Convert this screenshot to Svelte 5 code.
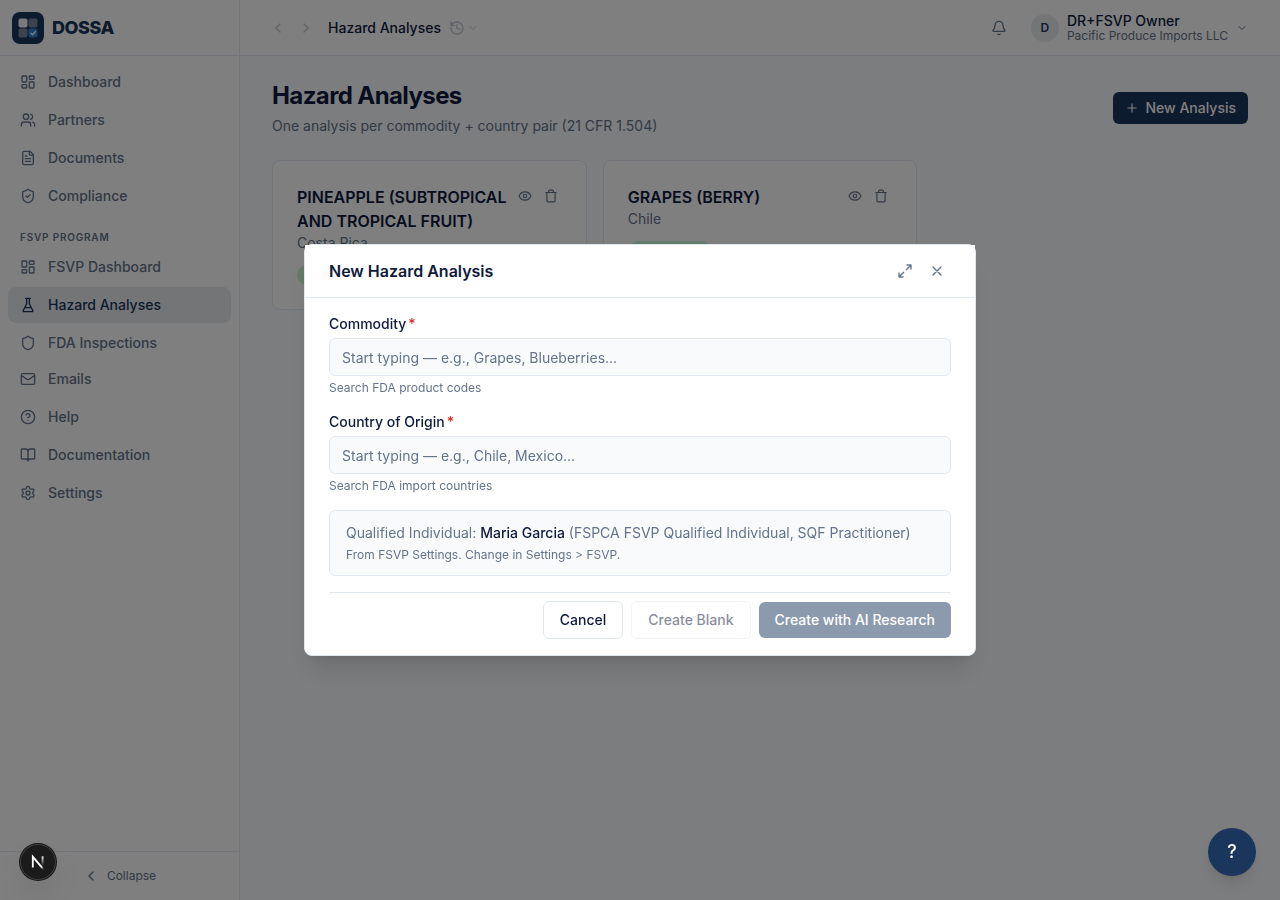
<script lang="ts">
	const icons: Record<string, string> = {
		dashboard: "M4 3h5a1 1 0 0 1 1 1v7a1 1 0 0 1-1 1H4a1 1 0 0 1-1-1V4a1 1 0 0 1 1-1zM15 3h5a1 1 0 0 1 1 1v3a1 1 0 0 1-1 1h-5a1 1 0 0 1-1-1V4a1 1 0 0 1 1-1zM15 12h5a1 1 0 0 1 1 1v7a1 1 0 0 1-1 1h-5a1 1 0 0 1-1-1v-7a1 1 0 0 1 1-1zM4 16h5a1 1 0 0 1 1 1v3a1 1 0 0 1-1 1H4a1 1 0 0 1-1-1v-3a1 1 0 0 1 1-1z",
		users: "M16 21v-2a4 4 0 0 0-4-4H6a4 4 0 0 0-4 4v2M13 7a4 4 0 1 1-8 0 4 4 0 0 1 8 0M22 21v-2a4 4 0 0 0-3-3.87M16 3.13a4 4 0 0 1 0 7.75",
		file: "M15 2H6a2 2 0 0 0-2 2v16a2 2 0 0 0 2 2h12a2 2 0 0 0 2-2V7zM14 2v4a2 2 0 0 0 2 2h4M10 9H8M16 13H8M16 17H8",
		shieldCheck: "M20 13c0 5-3.5 7.5-7.66 8.95a1 1 0 0 1-.67-.01C7.5 20.5 4 18 4 13V6a1 1 0 0 1 1-1c2 0 4.5-1.2 6.24-2.72a1.17 1.17 0 0 1 1.52 0C14.51 3.81 17 5 19 5a1 1 0 0 1 1 1zM9 12l2 2 4-4",
		shield: "M20 13c0 5-3.5 7.5-7.66 8.95a1 1 0 0 1-.67-.01C7.5 20.5 4 18 4 13V6a1 1 0 0 1 1-1c2 0 4.5-1.2 6.24-2.72a1.17 1.17 0 0 1 1.52 0C14.51 3.81 17 5 19 5a1 1 0 0 1 1 1z",
		flask: "M10 2v7.53a2 2 0 0 1-.21.9L4.72 20.55a1 1 0 0 0 .9 1.45h12.76a1 1 0 0 0 .9-1.45l-5.07-10.13a2 2 0 0 1-.21-.89V2M8.5 2h7M7 16h10",
		mail: "M4 4h16a2 2 0 0 1 2 2v12a2 2 0 0 1-2 2H4a2 2 0 0 1-2-2V6a2 2 0 0 1 2-2zM22 7l-8.97 5.7a1.94 1.94 0 0 1-2.06 0L2 7",
		help: "M22 12a10 10 0 1 1-20 0 10 10 0 0 1 20 0M9.09 9a3 3 0 0 1 5.83 1c0 2-3 3-3 3M12 17h.01",
		book: "M12 7v14M3 18a1 1 0 0 1-1-1V4a1 1 0 0 1 1-1h5a4 4 0 0 1 4 4 4 4 0 0 1 4-4h5a1 1 0 0 1 1 1v13a1 1 0 0 1-1 1h-6a3 3 0 0 0-3 3 3 3 0 0 0-3-3z",
		settings: "M9.671 4.136a2.34 2.34 0 0 1 4.659 0 2.34 2.34 0 0 0 3.319 1.915 2.34 2.34 0 0 1 2.33 4.033 2.34 2.34 0 0 0 0 3.831 2.34 2.34 0 0 1-2.33 4.033 2.34 2.34 0 0 0-3.319 1.915 2.34 2.34 0 0 1-4.659 0 2.34 2.34 0 0 0-3.32-1.915 2.34 2.34 0 0 1-2.33-4.033 2.34 2.34 0 0 0 0-3.831A2.34 2.34 0 0 1 6.35 6.051a2.34 2.34 0 0 0 3.319-1.915M15 12a3 3 0 1 1-6 0 3 3 0 0 1 6 0",
		left: "M15 18l-6-6 6-6",
		right: "M9 18l6-6-6-6",
		down: "M6 9l6 6 6-6",
		history: "M3 12a9 9 0 1 0 9-9 9.75 9.75 0 0 0-6.74 2.74L3 8M3 3v5h5M12 7v5l4 2",
		bell: "M10.268 21a2 2 0 0 0 3.464 0M3.262 15.326A1 1 0 0 0 4 17h16a1 1 0 0 0 .74-1.673C19.41 13.956 18 12.499 18 8A6 6 0 0 0 6 8c0 4.499-1.411 5.956-2.738 7.326",
		plus: "M5 12h14M12 5v14",
		eye: "M2.062 12.348a1 1 0 0 1 0-.696 10.75 10.75 0 0 1 19.876 0 1 1 0 0 1 0 .696 10.75 10.75 0 0 1-19.876 0M15 12a3 3 0 1 1-6 0 3 3 0 0 1 6 0",
		trash: "M3 6h18M19 6v14a2 2 0 0 1-2 2H7a2 2 0 0 1-2-2V6M8 6V4a2 2 0 0 1 2-2h4a2 2 0 0 1 2 2v2",
		expand: "M15 3h6v6M21 3l-7 7M3 21l7-7M9 21H3v-6",
		close: "M18 6L6 18M6 6l12 12",
	};

	const mainNav = [
		{ label: "Dashboard", icon: "dashboard" },
		{ label: "Partners", icon: "users" },
		{ label: "Documents", icon: "file" },
		{ label: "Compliance", icon: "shieldCheck" },
	];

	const fsvpNav = [
		{ label: "FSVP Dashboard", icon: "dashboard" },
		{ label: "Hazard Analyses", icon: "flask", active: true },
		{ label: "FDA Inspections", icon: "shield" },
	];

	const bottomNav = [
		{ label: "Emails", icon: "mail" },
		{ label: "Help", icon: "help" },
		{ label: "Documentation", icon: "book" },
		{ label: "Settings", icon: "settings" },
	];

	const analyses = [
		{ commodity: "PINEAPPLE (SUBTROPICAL AND TROPICAL FRUIT)", country: "Costa Rica" },
		{ commodity: "GRAPES (BERRY)", country: "Chile" },
	];

	let open = $state(true);
	let commodity = $state("");
	let country = $state("");
	let incomplete = $derived(!commodity || !country);
</script>

{#snippet icon(name: string, size = 16)}
	<svg class="icon" width={size} height={size} viewBox="0 0 24 24" aria-hidden="true">
		<path d={icons[name]} />
	</svg>
{/snippet}

{#snippet navList(items: { label: string; icon: string; active?: boolean }[])}
	<div class="nav-list">
		{#each items as item}
			<a class="nav-item" class:active={item.active} href="#top">
				{@render icon(item.icon)}
				{item.label}
			</a>
		{/each}
	</div>
{/snippet}

<div class="app">
	<aside class="sidebar">
		<div class="brand">
			<svg width="32" height="32" viewBox="0 0 32 32" aria-hidden="true">
				<rect width="32" height="32" rx="8" fill="#1a365d" />
				<rect x="6.5" y="6.5" width="9" height="9" rx="2" fill="#fff" opacity="0.95" />
				<rect x="16.5" y="6.5" width="9" height="9" rx="2" fill="#fff" opacity="0.4" />
				<rect x="6.5" y="16.5" width="9" height="9" rx="2" fill="#fff" opacity="0.4" />
				<rect x="16.5" y="16.5" width="9" height="9" rx="2" fill="#3182ce" />
				<path d="M19 21.2l1.5 1.5 3-3.2" fill="none" stroke="#fff" stroke-width="1.3" stroke-linecap="round" stroke-linejoin="round" />
			</svg>
			<span class="brand-name">DOSSA</span>
		</div>
		<nav class="nav">
			{@render navList(mainNav)}
			<h2 class="nav-heading">FSVP Program</h2>
			{@render navList(fsvpNav)}
			{@render navList(bottomNav)}
		</nav>
		<div class="sidebar-foot">
			<button class="collapse">{@render icon("left")}Collapse</button>
		</div>
	</aside>

	<div class="content">
		<header class="topbar">
			<button class="step" aria-label="Back">{@render icon("left")}</button>
			<button class="step" aria-label="Forward">{@render icon("right")}</button>
			<span class="crumb">Hazard Analyses</span>
			<button class="recent" aria-label="Recent pages">
				{@render icon("history")}
				{@render icon("down", 12)}
			</button>
			<button class="bell" aria-label="Notifications">{@render icon("bell")}</button>
			<button class="account">
				<span class="avatar">D</span>
				<span class="who">
					<span class="who-name">DR+FSVP Owner</span>
					<span class="who-org">Pacific Produce Imports LLC</span>
				</span>
				{@render icon("down", 12)}
			</button>
		</header>

		<main class="page">
			<div class="page-head">
				<div>
					<h1>Hazard Analyses</h1>
					<p>One analysis per commodity + country pair (21 CFR 1.504)</p>
				</div>
				<button class="new" onclick={() => (open = true)}>{@render icon("plus", 14)}New Analysis</button>
			</div>
			<div class="cards">
				{#each analyses as item}
					<article class="card">
						<div class="card-top">
							<h3>{item.commodity}</h3>
							<div class="card-actions">
								<button aria-label="View">{@render icon("eye", 14)}</button>
								<button aria-label="Delete">{@render icon("trash", 14)}</button>
							</div>
						</div>
						<p>{item.country}</p>
						<span class="status"></span>
					</article>
				{/each}
			</div>
		</main>
	</div>
</div>

{#if open}
	<div class="overlay">
		<div class="modal" role="dialog" aria-modal="true" aria-labelledby="modal-title">
			<div class="modal-head">
				<h2 id="modal-title">New Hazard Analysis</h2>
				<button aria-label="Expand">{@render icon("expand")}</button>
				<button aria-label="Close" onclick={() => (open = false)}>{@render icon("close")}</button>
			</div>
			<form class="modal-body" onsubmit={(e) => e.preventDefault()}>
				<div class="field">
					<label for="commodity">Commodity<span class="req">*</span></label>
					<input id="commodity" type="text" placeholder="Start typing — e.g., Grapes, Blueberries..." bind:value={commodity} />
					<p class="hint">Search FDA product codes</p>
				</div>
				<div class="field">
					<label for="country">Country of Origin<span class="req">*</span></label>
					<input id="country" type="text" placeholder="Start typing — e.g., Chile, Mexico..." bind:value={country} />
					<p class="hint">Search FDA import countries</p>
				</div>
				<div class="qi">
					<p>Qualified Individual: <strong>Maria Garcia</strong> (FSPCA FSVP Qualified Individual, SQF Practitioner)</p>
					<p class="hint">From FSVP Settings. Change in Settings &gt; FSVP.</p>
				</div>
				<div class="modal-foot">
					<button type="button" class="btn outline" onclick={() => (open = false)}>Cancel</button>
					<button type="button" class="btn outline" disabled={incomplete}>Create Blank</button>
					<button type="submit" class="btn primary" disabled={incomplete}>Create with AI Research</button>
				</div>
			</form>
		</div>
	</div>
{/if}

<button class="help-fab" aria-label="Open help">?</button>

<button class="dev-badge" aria-label="Dev tools">
	<svg width="36" height="36" viewBox="0 0 36 36" fill="none" aria-hidden="true">
		<defs>
			<linearGradient id="dev-diag" x1="18" y1="18" x2="24" y2="25" gradientUnits="userSpaceOnUse">
				<stop stop-color="#fff" />
				<stop offset="0.6" stop-color="#fff" />
				<stop offset="1" stop-color="#fff" stop-opacity="0" />
			</linearGradient>
			<linearGradient id="dev-stem" x1="22" y1="12" x2="22" y2="22" gradientUnits="userSpaceOnUse">
				<stop stop-color="#fff" />
				<stop offset="1" stop-color="#fff" stop-opacity="0" />
			</linearGradient>
		</defs>
		<path d="M12.8 23.5V12.8L23.6 25.4" stroke="url(#dev-diag)" stroke-width="1.8" />
		<path d="M22.6 12.3v9.8" stroke="url(#dev-stem)" stroke-width="1.8" />
	</svg>
</button>

<style>
	:global(body) {
		font-family: Inter, "Liberation Sans", sans-serif;
		font-size: 14px;
		line-height: 20px;
		color: #0f1b3d;
		background: #f8fafc;
	}

	h1, h2, h3, p {
		margin: 0;
	}

	button, input {
		font: inherit;
		color: inherit;
		box-sizing: border-box;
	}

	button {
		display: flex;
		align-items: center;
		justify-content: center;
		padding: 0;
		border: none;
		background: none;
		cursor: pointer;
	}

	.icon {
		flex: none;
		fill: none;
		stroke: currentColor;
		stroke-width: 2;
		stroke-linecap: round;
		stroke-linejoin: round;
	}

	.app {
		display: flex;
		min-height: 100vh;
	}

	/* sidebar */
	.sidebar {
		display: flex;
		flex-direction: column;
		flex: none;
		width: 240px;
		box-sizing: border-box;
		background: #fff;
		border-right: 1px solid #e2e8f0;
		color: #64748b;
	}

	.brand {
		display: flex;
		align-items: center;
		gap: 8px;
		height: 56px;
		box-sizing: border-box;
		padding: 0 12px;
		border-bottom: 1px solid #e2e8f0;
	}

	.brand-name {
		font-size: 18px;
		font-weight: 800;
		letter-spacing: -0.025em;
		color: #1a365d;
	}

	.nav {
		flex: 1;
		padding: 8px;
	}

	.nav-list {
		display: flex;
		flex-direction: column;
		gap: 2px;
	}

	.nav-item {
		display: flex;
		align-items: center;
		gap: 12px;
		padding: 8px 12px;
		border-radius: 8px;
		font-weight: 500;
		color: inherit;
		text-decoration: none;
	}

	.nav-item.active {
		background: #e8ebef;
		color: #1a365d;
	}

	.nav-heading {
		padding: 16px 12px 4px;
		font-size: 10px;
		line-height: 15px;
		font-weight: 600;
		letter-spacing: 0.08em;
		text-transform: uppercase;
	}

	.sidebar-foot {
		padding: 8px;
		border-top: 1px solid #e2e8f0;
	}

	.collapse {
		gap: 8px;
		width: 100%;
		height: 32px;
		font-size: 12px;
	}

	/* top bar */
	.content {
		flex: 1;
		min-width: 0;
	}

	.topbar {
		display: flex;
		align-items: center;
		height: 56px;
		box-sizing: border-box;
		padding: 0 24px;
		background: #fff;
		border-bottom: 1px solid #e2e8f0;
		color: #64748b;
	}

	.step {
		width: 28px;
		height: 28px;
		opacity: 0.4;
	}

	.crumb {
		margin-left: 8px;
		font-weight: 500;
		color: #0f1b3d;
	}

	.recent {
		gap: 2px;
		padding: 4px;
		margin: 0 auto 0 4px;
		opacity: 0.4;
	}

	.bell {
		width: 32px;
		height: 32px;
	}

	.account {
		gap: 8px;
		margin-left: 8px;
		padding: 4px 8px;
		text-align: left;
	}

	.avatar {
		display: grid;
		place-items: center;
		width: 28px;
		height: 28px;
		border-radius: 50%;
		background: #e8ebef;
		font-size: 12px;
		font-weight: 600;
		color: #1a365d;
	}

	.who {
		display: flex;
		flex-direction: column;
		line-height: 15px;
	}

	.who-name {
		font-weight: 500;
		color: #0f1b3d;
	}

	.who-org {
		font-size: 12px;
	}

	/* page */
	.page {
		padding: 24px 32px;
	}

	.page-head {
		display: flex;
		align-items: center;
		justify-content: space-between;
		margin-bottom: 24px;
	}

	h1 {
		font-size: 24px;
		line-height: 32px;
		font-weight: 700;
		letter-spacing: -0.025em;
	}

	.page-head p {
		margin-top: 4px;
		color: #64748b;
	}

	.new {
		gap: 6px;
		height: 32px;
		padding: 0 12px;
		border-radius: 6px;
		background: #1a365d;
		font-weight: 500;
		color: #fff;
	}

	.cards {
		display: grid;
		grid-template-columns: repeat(3, 1fr);
		gap: 16px;
	}

	.card {
		padding: 24px;
		border: 1px solid #e2e8f0;
		border-radius: 8px;
		background: #fff;
	}

	.card-top {
		display: flex;
		align-items: flex-start;
		justify-content: space-between;
	}

	.card h3 {
		font-size: 16px;
		line-height: 24px;
		font-weight: 600;
	}

	.card p {
		color: #64748b;
	}

	.card-actions {
		display: flex;
		gap: 4px;
		color: #64748b;
	}

	.card-actions button {
		width: 22px;
		height: 22px;
	}

	.status {
		display: block;
		width: 84px;
		height: 20px;
		margin-top: 12px;
		border-radius: 10px;
		background: #c6f6d5;
	}

	/* dialog */
	.overlay {
		position: fixed;
		inset: 0;
		display: flex;
		align-items: center;
		justify-content: center;
		background: rgba(0, 0, 0, 0.5);
	}

	.modal {
		width: 100%;
		max-width: 672px;
		box-sizing: border-box;
		border: 1px solid #e2e8f0;
		border-radius: 8px;
		background: #fff;
		box-shadow: 0 20px 25px -5px rgba(0, 0, 0, 0.1), 0 8px 10px -6px rgba(0, 0, 0, 0.1);
	}

	.modal-head {
		display: flex;
		align-items: center;
		gap: 4px;
		padding: 12px 24px;
		border-bottom: 1px solid #e2e8f0;
		background: #fff;
	}

	.modal-head h2 {
		flex: 1;
		font-size: 16px;
		line-height: 24px;
		font-weight: 600;
	}

	.modal-head button {
		width: 28px;
		height: 28px;
		color: #64748b;
	}

	.modal-body {
		display: flex;
		flex-direction: column;
		gap: 16px;
		padding: 16px 24px;
	}

	.field {
		display: flex;
		flex-direction: column;
		gap: 4px;
	}

	label {
		font-weight: 500;
	}

	.req {
		margin-left: 2px;
		color: #dc2626;
	}

	input {
		width: 100%;
		height: 38px;
		padding: 8px 12px;
		border: 1px solid #e2e8f0;
		border-radius: 6px;
		background: #f8fafc;
	}

	input::placeholder {
		color: #64748b;
		opacity: 1;
	}

	.hint {
		font-size: 12px;
		line-height: 16px;
		color: #64748b;
	}

	.qi {
		display: flex;
		flex-direction: column;
		gap: 4px;
		padding: 12px 16px;
		border: 1px solid #e2e8f0;
		border-radius: 6px;
		background: #f8fafc;
		color: #64748b;
	}

	.qi strong {
		font-weight: 500;
		color: #0f1b3d;
	}

	.modal-foot {
		display: flex;
		align-items: center;
		justify-content: flex-end;
		gap: 8px;
		padding-top: 8px;
		border-top: 1px solid #e2e8f0;
	}

	.btn {
		padding: 8px 16px;
		border-radius: 6px;
		font-weight: 500;
	}

	.btn.outline {
		border: 1px solid #e2e8f0;
		background: #fff;
	}

	.btn.primary {
		background: #1a365d;
		color: #fff;
	}

	.btn:disabled {
		opacity: 0.5;
		cursor: default;
	}

	/* floating buttons */
	.help-fab {
		position: fixed;
		right: 24px;
		bottom: 24px;
		width: 48px;
		height: 48px;
		border-radius: 50%;
		background: #1a365d;
		font-size: 18px;
		font-weight: 500;
		color: #fff;
		box-shadow: 0 10px 15px -3px rgba(0, 0, 0, 0.1), 0 4px 6px -4px rgba(0, 0, 0, 0.1);
	}

	.dev-badge {
		position: fixed;
		left: 20px;
		bottom: 20px;
		width: 36px;
		height: 36px;
		border-radius: 50%;
		background: #1b1b1b;
		box-shadow: 0 0 0 1px #171717, inset 0 0 0 1px #3d3d3d, 0 16px 32px -8px rgba(0, 0, 0, 0.24);
	}
</style>
